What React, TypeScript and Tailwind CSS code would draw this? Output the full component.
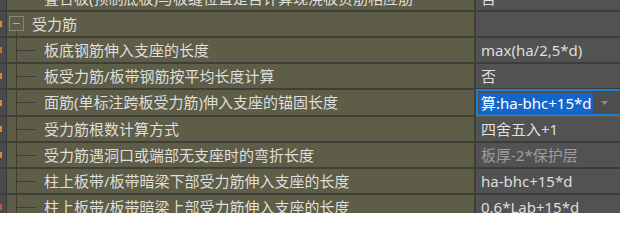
import React from 'react';

type Row = {
  label: string;
  value?: string;
  kind: 'child' | 'group' | 'top';
  dim?: boolean;
  editing?: boolean;
  marker?: string;
};

const rows: Row[] = [
  { label: '叠合板(预制底板)与板缝位置是否计算现浇板负筋相应筋', value: '否', kind: 'top' },
  { label: '受力筋', kind: 'group', marker: 'bg-[#d98a2e]' },
  { label: '板底钢筋伸入支座的长度', value: 'max(ha/2,5*d)', kind: 'child', marker: 'bg-[#c9702a]' },
  { label: '板受力筋/板带钢筋按平均长度计算', value: '否', kind: 'child', marker: 'bg-[#d98a2e]' },
  { label: '面筋(单标注跨板受力筋)伸入支座的锚固长度', value: '算:ha-bhc+15*d', kind: 'child', editing: true, marker: 'bg-[#d98a2e]' },
  { label: '受力筋根数计算方式', value: '四舍五入+1', kind: 'child', marker: 'bg-[#d98a2e]' },
  { label: '受力筋遇洞口或端部无支座时的弯折长度', value: '板厚-2*保护层', kind: 'child', dim: true, marker: 'bg-[#d98a2e]' },
  { label: '柱上板带/板带暗梁下部受力筋伸入支座的长度', value: 'ha-bhc+15*d', kind: 'child' },
  { label: '柱上板带/板带暗梁上部受力筋伸入支座的长度', value: '0.6*Lab+15*d', kind: 'child', marker: 'bg-[#c8553a]' },
];

function TreeLines({ kind, tall }: { kind: Row['kind']; tall?: boolean }) {
  const h = tall ? 25 : 24;
  if (kind === 'group') {
    return (
      <svg width="25" height={h} className="shrink-0">
        <rect x="2.5" y="4.5" width="14" height="14" fill="none" stroke="#86857a" />
        <line x1="6" y1="11.5" x2="13" y2="11.5" stroke="#a8a89c" />
        <line x1="9.5" y1="19" x2="9.5" y2={h} stroke="#3d3d36" />
      </svg>
    );
  }
  if (kind === 'top') {
    return <div className="w-[37px] shrink-0" />;
  }
  return (
    <svg width="37" height={h} className="shrink-0">
      <line x1="9.5" y1="0" x2="9.5" y2={h} stroke="#3d3d36" />
      <line x1="9" y1="12.5" x2="29" y2="12.5" stroke="#3d3d36" />
    </svg>
  );
}

export default function App() {
  return (
    <div
      className="w-[620px] h-[213px] overflow-hidden bg-[#5e5d48] text-[15px] text-[#dededa]"
      style={{ fontFamily: '"Noto Sans", "Noto Sans CJK SC", sans-serif' }}
    >
      <div className="-mt-[14px] flex flex-col">
        {rows.map((row, i) => (
          <div key={i} className={`flex ${row.editing ? 'h-[27px]' : 'h-[26px]'}`}>
            {/* name column */}
            <div className="flex w-[476px] shrink-0 border-b-2 border-r-2 border-[#3f3f39] bg-[#5e5d48]">
              <div className="flex w-[7px] shrink-0 items-center border-r border-[#38383a] bg-[#4a4a4d]">
                {row.marker && <span className={`h-[6px] w-[2px] ${row.marker}`} />}
              </div>
              <TreeLines kind={row.kind} tall={row.editing} />
              <span className="truncate leading-[24px]">{row.label}</span>
            </div>

            {/* value column */}
            {row.editing ? (
              <div className="-mt-px flex h-[27px] flex-1 items-center border-y-2 border-l-2 border-[#1a7fd6] bg-[#4e4e4e] pl-[1px]">
                <span className="bg-[#1566c8] px-[2px] leading-[20px] text-white">{row.value}</span>
                <svg width="7" height="4" className="ml-auto mr-[12px]">
                  <path d="M0 0 L7 0 L3.5 4 Z" fill="#8c8c8c" />
                </svg>
              </div>
            ) : (
              <div className="flex flex-1 items-center border-b-2 border-[#3c3c3c] bg-[#525252] pl-[5px]">
                <span className={`truncate leading-[24px] ${row.dim ? 'text-[#9c9c9c]' : ''}`}>{row.value}</span>
              </div>
            )}
          </div>
        ))}
      </div>
    </div>
  );
}
